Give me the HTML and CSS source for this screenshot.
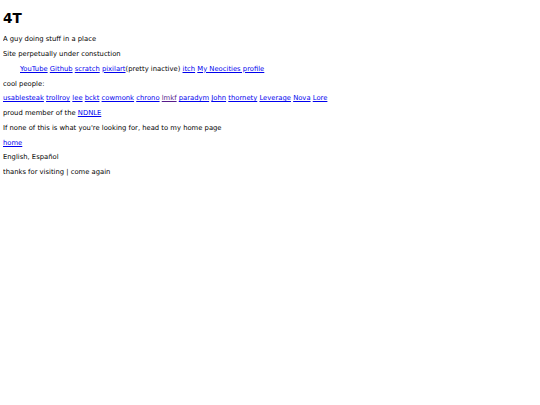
FILE: index.html
```html
<!DOCTYPE html>
<html lang="en">
<head>
<meta charset="utf-8">
<title>4T</title>
<link rel="stylesheet" href="styles.css">
</head>
<body>
<h1 class="title">4T</h1>
<p>A guy doing stuff in a place</p>
<p>Site perpetually under constuction</p>
<p class="links"><a href="#">YouTube</a> <a href="#">Github</a> <a href="#">scratch</a> <a href="#">pixilart</a>(pretty inactive) <a href="#">itch</a> <a href="#">My Neocities profile</a></p>
<p>cool people:</p>
<p><a href="#">usablesteak</a> <a href="#">trollroy</a> <a href="#">lee</a> <a href="#">bckt</a> <a href="#">cowmonk</a> <a href="#">chrono</a> <a href="#" class="visited">lmkf</a> <a href="#">paradym</a> <a href="#">John</a> <a href="#">thornety</a> <a href="#">Leverage</a> <a href="#">Nova</a> <a href="#">Lore</a></p>
<p>proud member of the <a href="#">NDNLE</a></p>
<p>If none of this is what you're looking for, head to my home page</p>
<p><a href="#">home</a></p>
<p>English, Español</p>
<p>thanks for visiting | come again</p>
</body>
</html>
```
FILE: styles.css
```css
html {
  background: #ffffff;
}
body {
  margin: 3px;
  font-family: "DejaVu Sans", Verdana, sans-serif;
  font-size: 6.8px;
  line-height: 8px;
  color: #000000;
}
.title {
  font-size: 2em;
  line-height: normal;
  font-weight: bold;
  margin: 7px 0 0.67em;
}
p {
  margin: 1em 0;
}
a {
  color: #0000ee;
}
a.visited {
  color: #551a8b;
}
.links {
  padding-left: 17px;
}
```
